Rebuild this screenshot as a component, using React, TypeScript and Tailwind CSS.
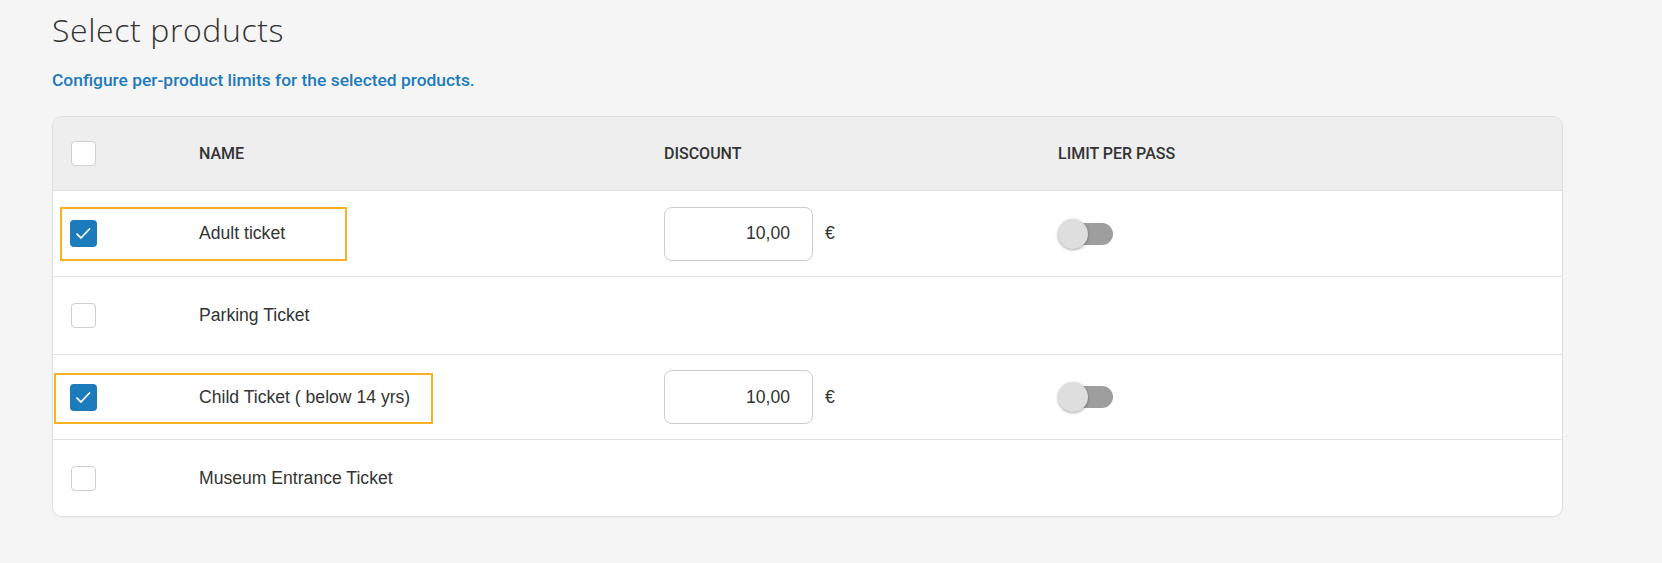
import React from "react";

type Product = {
  name: string;
  selected: boolean;
  discount?: string;
  height: string;
  highlight?: string;
};

const products: Product[] = [
  { name: "Adult ticket", selected: true, discount: "10,00", height: "h-[86px]", highlight: "left-[7px] top-[16px] w-[287px] h-[54px]" },
  { name: "Parking Ticket", selected: false, height: "h-[78px]" },
  { name: "Child Ticket ( below 14 yrs)", selected: true, discount: "10,00", height: "h-[85px]", highlight: "left-[1px] top-[18px] w-[379px] h-[51px]" },
  { name: "Museum Entrance Ticket", selected: false, height: "h-[76px]" },
];

const Checkbox = ({ checked }: { checked: boolean }) =>
  checked ? (
    <div className="w-[27px] h-[27px] rounded-[4px] bg-[#1c7bbd] flex items-center justify-center">
      <svg width="27" height="27" viewBox="0 0 27 27" fill="none">
        <path d="M7 14.2l4 3.8 8.5-9" stroke="white" strokeWidth="1.8" strokeLinecap="round" strokeLinejoin="round" />
      </svg>
    </div>
  ) : (
    <div className="w-[25px] h-[25px] rounded-[4px] border border-[#cfcfcf] bg-white" />
  );

const Toggle = () => (
  <div className="relative w-[55px] h-[30px]">
    <div className="absolute left-[8px] right-0 top-[4px] h-[22px] rounded-full bg-[#9e9e9e]" />
    <div className="absolute left-0 top-0 w-[30px] h-[30px] rounded-full bg-[#dedede] shadow-[0_1px_3px_rgba(0,0,0,0.35)]" />
  </div>
);

export default function App() {
  const cols = "grid grid-cols-[146px_465px_394px_1fr] items-center";
  return (
    <div className="min-h-[563px] bg-[#f5f5f5] pl-[52px] pt-[8px]">
      <h1 className="text-[32px] leading-[44px] font-light tracking-[0.6px] text-[#333]" style={{ fontFamily: '"Open Sans", sans-serif' }}>
        Select products
      </h1>
      <p className="mt-[17px] text-[17.4px] leading-[22px] font-medium text-[#1d7abd]" style={{ fontFamily: 'Roboto, sans-serif' }}>
        Configure per-product limits for the selected products.
      </p>
      <div className="mt-[25px] w-[1511px] rounded-[10px] border border-[#e0e0e0] bg-white overflow-hidden shadow-[0_1px_2px_rgba(0,0,0,0.04)]">
        <div className={`${cols} h-[74px] bg-[#eeeeee] border-b border-[#dedede] text-[16px] font-medium text-[#333]`} style={{ fontFamily: 'Roboto, sans-serif' }}>
          <div className="pl-[18px]">
            <Checkbox checked={false} />
          </div>
          <div>NAME</div>
          <div>DISCOUNT</div>
          <div>LIMIT PER PASS</div>
        </div>
        {products.map((p, i) => (
          <div
            key={i}
            className={`${cols} relative ${p.height} ${i < products.length - 1 ? "border-b border-[#e0e0e0]" : ""} text-[17.6px] text-[#333]`}
            style={{ fontFamily: '"Liberation Sans", Arial, sans-serif' }}
          >
            {p.highlight && <div className={`absolute ${p.highlight} border-2 border-[#f9b121] pointer-events-none`} />}
            <div className={p.selected ? "pl-[17px]" : "pl-[18px]"}>
              <Checkbox checked={p.selected} />
            </div>
            <div>{p.name}</div>
            <div className="flex items-center">
              {p.discount && (
                <>
                  <div className="w-[149px] h-[54px] rounded-[8px] border border-[#cccccc] flex items-center justify-end pr-[22px]">
                    {p.discount}
                  </div>
                  <span className="ml-[12px]">€</span>
                </>
              )}
            </div>
            <div>{p.discount && <Toggle />}</div>
          </div>
        ))}
      </div>
    </div>
  );
}
